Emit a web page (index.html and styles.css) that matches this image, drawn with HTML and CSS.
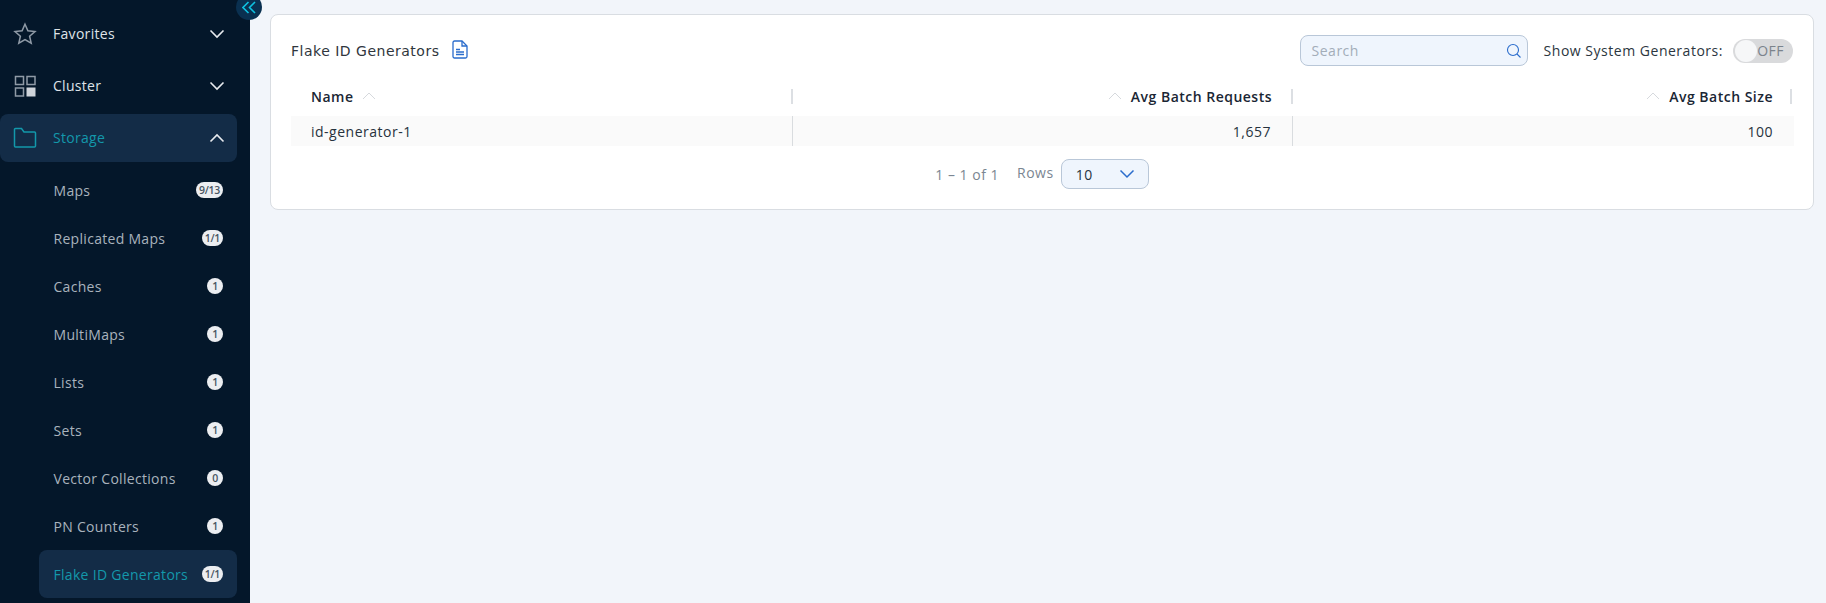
FILE: index.html
```html
<!DOCTYPE html>
<html lang="en">
<head>
<meta charset="utf-8">
<title>Flake ID Generators</title>
<link rel="stylesheet" href="styles.css">
</head>
<body>
<div class="app">
  <aside class="sidebar">
    <button class="collapse" aria-label="Collapse">
      <svg width="14" height="13" viewBox="0 0 14 13"><path d="M6.500 1 1 6.500 6.500 12M13 1 7.500 6.500 13 12"/></svg>
    </button>
    <nav class="nav">
      <div class="nav-row">
        <svg class="nav-icon" width="24" height="24" viewBox="0 0 24 24"><path d="M12 2.200l2.900 6.600 7.100.7-5.400 4.700 1.600 7-6.200-3.700-6.200 3.700 1.600-7L2 9.500l7.100-.7z"/></svg>
        <span class="nav-label">Favorites</span>
        <svg class="chev" width="16" height="10" viewBox="0 0 16 10"><path d="M1.500 1.500 8 8l6.500-6.500"/></svg>
      </div>
      <div class="nav-row">
        <svg class="nav-icon" width="24" height="24" viewBox="0 0 24 24"><path d="M2.500 2.500h8v8h-8zM14 2.500h8v8h-8zM2.500 14h8v8h-8z"/><path class="solid" d="M13.500 13.500h9v9h-9z"/></svg>
        <span class="nav-label">Cluster</span>
        <svg class="chev" width="16" height="10" viewBox="0 0 16 10"><path d="M1.500 1.500 8 8l6.500-6.500"/></svg>
      </div>
      <div class="nav-row active">
        <svg class="nav-icon" width="24" height="24" viewBox="0 0 24 24"><path d="M1.500 20V3.500a1 1 0 0 1 1-1h6l2.500 3.500h10.500a1 1 0 0 1 1 1V20a1 1 0 0 1-1 1h-19a1 1 0 0 1-1-1z"/></svg>
        <span class="nav-label">Storage</span>
        <svg class="chev" width="16" height="10" viewBox="0 0 16 10"><path d="M1.500 8.500 8 2l6.500 6.500"/></svg>
      </div>
      <div class="sub-row"><span>Maps</span><b class="badge">9/13</b></div>
      <div class="sub-row"><span>Replicated Maps</span><b class="badge">1/1</b></div>
      <div class="sub-row"><span>Caches</span><b class="badge">1</b></div>
      <div class="sub-row"><span>MultiMaps</span><b class="badge">1</b></div>
      <div class="sub-row"><span>Lists</span><b class="badge">1</b></div>
      <div class="sub-row"><span>Sets</span><b class="badge">1</b></div>
      <div class="sub-row"><span>Vector Collections</span><b class="badge">0</b></div>
      <div class="sub-row"><span>PN Counters</span><b class="badge">1</b></div>
      <div class="sub-row current"><span>Flake ID Generators</span><b class="badge">1/1</b></div>
    </nav>
  </aside>
  <main class="main">
    <section class="card">
      <header class="card-head">
        <h1 class="title">Flake ID Generators</h1>
        <svg class="doc" width="16" height="19" viewBox="0 0 16 19"><path d="M1 2.500a1.500 1.500 0 0 1 1.500-1.500H10l5 5v10.500a1.500 1.500 0 0 1-1.500 1.500h-11A1.500 1.500 0 0 1 1 16.500z"/><path d="M10 1v5h5M4 9.500h4M4 12h8M4 14.500h8"/></svg>
        <div class="search">
          <span class="placeholder">Search</span>
          <svg width="16" height="16" viewBox="0 0 16 16"><circle cx="7" cy="7" r="5.500"/><path d="M11 11l3.500 3.500"/></svg>
        </div>
        <span class="toggle-label">Show System Generators:</span>
        <div class="toggle"><i class="knob"></i><span>OFF</span></div>
      </header>
      <div class="table">
        <div class="cell head left"><span>Name</span><svg class="sort" width="14" height="8" viewBox="0 0 14 8"><path d="M1 7l6-6 6 6"/></svg></div>
        <div class="cell head"><svg class="sort" width="14" height="8" viewBox="0 0 14 8"><path d="M1 7l6-6 6 6"/></svg><span>Avg Batch Requests</span></div>
        <div class="cell head last"><svg class="sort" width="14" height="8" viewBox="0 0 14 8"><path d="M1 7l6-6 6 6"/></svg><span>Avg Batch Size</span></div>
        <div class="cell body left">id-generator-1</div>
        <div class="cell body mid">1,657</div>
        <div class="cell body">100</div>
      </div>
      <footer class="pager">
        <span class="range">1 – 1 of 1</span>
        <span class="rows">Rows</span>
        <div class="select"><span>10</span><svg width="16" height="10" viewBox="0 0 16 10"><path d="M1.500 1.500 8 8l6.500-6.500"/></svg></div>
      </footer>
    </section>
  </main>
</div>
</body>
</html>
```
FILE: styles.css
```css
* { box-sizing: border-box; }
html, body { margin: 0; height: 100%; overflow: hidden; }
body { font-family: "Open Sans", "Noto Sans", sans-serif; background: #f2f5fa; color: #1a2634; }
.app { display: flex; height: 603px; }
.sidebar { position: relative; flex: 0 0 250px; background: #04172a; padding-top: 10px; overflow: visible; }
.collapse { position: absolute; right: -12px; top: -6px; width: 26px; height: 26px; border: 0; padding: 0; border-radius: 50%; background: #0a3050; display: flex; align-items: center; justify-content: center; }
.collapse svg { fill: none; stroke: #0fc1e0; stroke-width: 1.600; }
.nav { display: flex; flex-direction: column; }
.nav-row { display: flex; align-items: center; height: 48px; width: 237px; margin-bottom: 4px; padding: 0 12px 0 13px; border-radius: 8px; color: #dfe3e8; font-size: 14px; letter-spacing: .3px; }
.nav-row .nav-icon { flex: none; fill: none; stroke: #8f9aa6; stroke-width: 1.500; }
.nav-row .solid { fill: #cfd4da; stroke: none; }
.nav-label { flex: 1; margin-left: 16px; padding-bottom: 2px; }
.chev { flex: none; fill: none; stroke: #e8ebef; stroke-width: 1.600; }
.nav-row.active { background: #132c47; color: #1398ab; }
.nav-row.active .nav-icon { stroke: #1398ab; }
.sub-row { display: flex; align-items: center; justify-content: space-between; height: 48px; width: 198px; margin-left: 39px; padding: 0 14px 0 14.500px; border-radius: 8px; color: #a9b3bd; font-size: 14px; letter-spacing: .3px; }
.sub-row.current { background: #132c47; color: #1398ab; }
.badge { display: inline-flex; align-items: center; justify-content: center; min-width: 16px; height: 16px; padding: 0 3px; border-radius: 8px; background: #eceef1; color: #4a5663; font-size: 10.500px; font-weight: 600; letter-spacing: -.3px; }
.main { flex: 1; padding: 14px 12px 0 20px; min-width: 0; }
.card { height: 196px; background: #fff; border: 1px solid #d9dde2; border-radius: 8px; padding: 0 20px; }
.card-head { display: flex; align-items: center; height: 61px; padding-top: 10px; }
.title { margin: 0; font-family: "DejaVu Sans", Inter, sans-serif; font-weight: 400; font-size: 14px; letter-spacing: .5px; color: #30363d; }
.doc { margin: -2px auto 0 13px; fill: none; stroke: #2a6ccc; stroke-width: 1.300; }
.search { display: flex; align-items: center; justify-content: space-between; width: 228px; height: 31px; padding: 0 5px 0 11px; background: #eff5fd; border: 1px solid #b9c7d8; border-radius: 8px; }
.placeholder { font-size: 14px; color: #a3adb9; letter-spacing: .5px; }
.search svg { fill: none; stroke: #2a6ccc; stroke-width: 1.100; }
.toggle-label { margin-left: 16px; font-size: 14px; letter-spacing: .52px; color: #2b3640; }
.toggle { display: flex; align-items: center; justify-content: flex-end; width: 60px; height: 24px; margin-left: 10px; padding-right: 9px; position: relative; border-radius: 12px; background: #d9dadc; color: #7b838c; font-size: 14px; letter-spacing: .5px; }
.knob { position: absolute; left: 2px; top: 1px; width: 22px; height: 22px; border-radius: 50%; background: #f6f7f8; }
.table { display: grid; grid-template-columns: 502px 500px 501px; margin-top: 7px; }
.cell { display: flex; align-items: center; justify-content: flex-end; gap: 9px; padding: 0 21px 0 20px; font-size: 14px; letter-spacing: .5px; position: relative; }
.cell.left { justify-content: flex-start; }
.head { height: 33px; padding-bottom: 7px; font-weight: 600; letter-spacing: .49px; color: #1a2634; }
.head::after { content: ""; position: absolute; right: 0; top: 6px; width: 2px; height: 15px; background: #dcdfe3; }
.head.last::after { right: 2px; }
.sort { flex: none; fill: none; stroke: #d6d9dd; stroke-width: 1; }
.body { height: 30px; background: #fafafa; color: #27323d; }
.body.mid { padding-right: 22px; }
.body:not(:last-child)::after { content: ""; position: absolute; right: 0; top: 0; width: 1px; height: 30px; background: #d9dcdf; }
.pager { display: flex; align-items: center; justify-content: center; gap: 18px; height: 30px; margin-top: 13px; font-size: 14px; letter-spacing: .5px; }
.range { color: #7b8692; }
.rows { color: #7b8692; margin-right: -11px; margin-top: -3px; }
.select { display: flex; align-items: center; justify-content: space-between; width: 88px; height: 30px; padding: 0 13px 0 14px; background: #eff5fd; border: 1px solid #b9c7d8; border-radius: 8px; color: #27323d; }
.select svg { fill: none; stroke: #2a6ccc; stroke-width: 1.500; }
```
